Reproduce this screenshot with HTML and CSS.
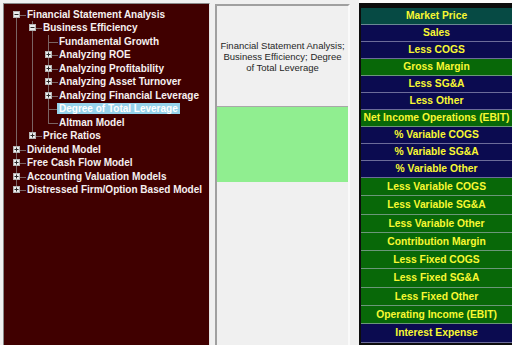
FILE: index.html
```html
<!DOCTYPE html>
<html lang="en">
<head>
    <meta charset="UTF-8">
    <title>Valuation Models</title>
    <link rel="stylesheet" href="styles.css">
</head>
<body>
    <div class="app">
        <div class="tree-pane">
            <ul class="tree root">
                <li>
                    <div class="row"><svg class="tg" width="7" height="7" viewBox="0 0 7 7"><rect x="0.5" y="0.5" width="6" height="6" fill="#ececec" stroke="#b4b4b4"/><path d="M1.5 3.5h4" stroke="#2a2a2a"/></svg><span class="label">Financial Statement Analysis</span></div>
                    <ul class="tree">
                        <li>
                            <div class="row"><svg class="tg" width="7" height="7" viewBox="0 0 7 7"><rect x="0.5" y="0.5" width="6" height="6" fill="#ececec" stroke="#b4b4b4"/><path d="M1.5 3.5h4" stroke="#2a2a2a"/></svg><span class="label">Business Efficiency</span></div>
                            <ul class="tree">
                                <li><div class="row"><span class="tg"></span><span class="label">Fundamental Growth</span></div></li>
                                <li><div class="row"><svg class="tg" width="7" height="7" viewBox="0 0 7 7"><rect x="0.5" y="0.5" width="6" height="6" fill="#ececec" stroke="#b4b4b4"/><path d="M1.5 3.5h4M3.5 1.5v4" stroke="#2a2a2a"/></svg><span class="label">Analyzing ROE</span></div></li>
                                <li><div class="row"><svg class="tg" width="7" height="7" viewBox="0 0 7 7"><rect x="0.5" y="0.5" width="6" height="6" fill="#ececec" stroke="#b4b4b4"/><path d="M1.5 3.5h4M3.5 1.5v4" stroke="#2a2a2a"/></svg><span class="label">Analyzing Profitability</span></div></li>
                                <li><div class="row"><svg class="tg" width="7" height="7" viewBox="0 0 7 7"><rect x="0.5" y="0.5" width="6" height="6" fill="#ececec" stroke="#b4b4b4"/><path d="M1.5 3.5h4M3.5 1.5v4" stroke="#2a2a2a"/></svg><span class="label">Analyzing Asset Turnover</span></div></li>
                                <li><div class="row"><svg class="tg" width="7" height="7" viewBox="0 0 7 7"><rect x="0.5" y="0.5" width="6" height="6" fill="#ececec" stroke="#b4b4b4"/><path d="M1.5 3.5h4M3.5 1.5v4" stroke="#2a2a2a"/></svg><span class="label">Analyzing Financial Leverage</span></div></li>
                                <li><div class="row"><span class="tg"></span><span class="label selected">Degree of Total Leverage</span></div></li>
                                <li><div class="row"><span class="tg"></span><span class="label">Altman Model</span></div></li>
                            </ul>
                        </li>
                        <li><div class="row"><svg class="tg" width="7" height="7" viewBox="0 0 7 7"><rect x="0.5" y="0.5" width="6" height="6" fill="#ececec" stroke="#b4b4b4"/><path d="M1.5 3.5h4M3.5 1.5v4" stroke="#2a2a2a"/></svg><span class="label">Price Ratios</span></div></li>
                    </ul>
                </li>
                <li><div class="row"><svg class="tg" width="7" height="7" viewBox="0 0 7 7"><rect x="0.5" y="0.5" width="6" height="6" fill="#ececec" stroke="#b4b4b4"/><path d="M1.5 3.5h4M3.5 1.5v4" stroke="#2a2a2a"/></svg><span class="label">Dividend Model</span></div></li>
                <li><div class="row"><svg class="tg" width="7" height="7" viewBox="0 0 7 7"><rect x="0.5" y="0.5" width="6" height="6" fill="#ececec" stroke="#b4b4b4"/><path d="M1.5 3.5h4M3.5 1.5v4" stroke="#2a2a2a"/></svg><span class="label">Free Cash Flow Model</span></div></li>
                <li><div class="row"><svg class="tg" width="7" height="7" viewBox="0 0 7 7"><rect x="0.5" y="0.5" width="6" height="6" fill="#ececec" stroke="#b4b4b4"/><path d="M1.5 3.5h4M3.5 1.5v4" stroke="#2a2a2a"/></svg><span class="label">Accounting Valuation Models</span></div></li>
                <li><div class="row"><svg class="tg" width="7" height="7" viewBox="0 0 7 7"><rect x="0.5" y="0.5" width="6" height="6" fill="#ececec" stroke="#b4b4b4"/><path d="M1.5 3.5h4M3.5 1.5v4" stroke="#2a2a2a"/></svg><span class="label">Distressed Firm/Option Based Model</span></div></li>
            </ul>
        </div>

        <div class="info-pane">
            <div class="info-title"><span>Financial Statement Analysis; Business Efficiency; Degree of Total Leverage</span></div>
            <div class="info-swatch"></div>
        </div>

        <div class="grid-pane">
            <div class="cell teal">Market Price</div>
            <div class="cell navy">Sales</div>
            <div class="cell navy">Less COGS</div>
            <div class="cell green">Gross Margin</div>
            <div class="cell navy">Less SG&amp;A</div>
            <div class="cell navy">Less Other</div>
            <div class="cell green">Net Income Operations (EBIT)</div>
            <div class="cell navy">% Variable COGS</div>
            <div class="cell navy">% Variable SG&amp;A</div>
            <div class="cell navy">% Variable Other</div>
            <div class="cell green tall">Less Variable COGS</div>
            <div class="cell green tall">Less Variable SG&amp;A</div>
            <div class="cell green tall">Less Variable Other</div>
            <div class="cell green tall">Contribution Margin</div>
            <div class="cell green tall">Less Fixed COGS</div>
            <div class="cell green tall">Less Fixed SG&amp;A</div>
            <div class="cell green tall">Less Fixed Other</div>
            <div class="cell green tall">Operating Income (EBIT)</div>
            <div class="cell navy tall">Interest Expense</div>
        </div>
    </div>
</body>
</html>
```

FILE: styles.css
```css
body {
    margin: 0;
    background-color: #f0f0f0;
    font-family: "Liberation Sans", Arial, sans-serif;
    overflow: hidden;
}

.app {
    display: flex;
    height: 345px;
}

/* tree on the left */
.tree-pane {
    box-sizing: border-box;
    width: 207px;
    margin: 3px 0 0 3px;
    padding-top: 3.5px;
    background-color: #400000;
    border-top: 1px solid #8a8a8a;
    border-left: 1px solid #8a8a8a;
    border-right: 1px solid #e4e4e4;
}

.tree {
    list-style: none;
    margin: 0;
    padding: 0;
}

.tree .tree {
    margin-left: 16px;
}

.tree li {
    position: relative;
}

.tree li::before {
    content: "";
    position: absolute;
    left: 12px;
    top: 0;
    bottom: 0;
    border-left: 1px solid #7a6464;
}

.tree li:last-child::before {
    bottom: auto;
    height: 7px;
}

.root > li:first-child::before {
    top: 7px;
}

.row {
    position: relative;
    display: flex;
    align-items: center;
    height: 13.5px;
}

.row::before {
    content: "";
    position: absolute;
    left: 12px;
    top: 7px;
    width: 10px;
    border-top: 1px solid #7a6464;
}

.tg {
    position: relative;
    z-index: 1;
    flex: none;
    width: 7px;
    height: 7px;
    margin-left: 9px;
}

.label {
    position: relative;
    z-index: 1;
    margin-left: 5px;
    padding: 0 2px;
    font-size: 10px;
    font-weight: bold;
    line-height: 11px;
    color: #f6f0f0;
    white-space: nowrap;
}

.label.selected {
    background-color: #96d3eb;
    color: #ffffff;
}

/* middle info box */
.info-pane {
    box-sizing: border-box;
    width: 135px;
    margin: 4px 0 0 5px;
    border-top: 2px solid #a0a0a0;
    border-left: 2px solid #a0a0a0;
    border-right: 2px solid #fafafa;
}

.info-title {
    height: 100px;
    display: flex;
    align-items: center;
    justify-content: center;
    text-align: center;
    border-bottom: 1px solid #a8a8a8;
    font-size: 9.5px;
    line-height: 11px;
    color: #262626;
}

.info-title span {
    max-width: 126px;
}

.info-swatch {
    height: 75px;
    background-color: #90ee90;
}

/* right value grid */
.grid-pane {
    box-sizing: border-box;
    width: 153px;
    margin-left: 9px;
    padding: 5px 0 0 2px;
    border-top: 3px solid #fbfbfb;
    background-color: #0c0c0c;
}

.cell {
    box-sizing: border-box;
    height: 17px;
    border-bottom: 1px solid rgba(190, 190, 215, 0.55);
    text-align: center;
    font-size: 10.3px;
    font-weight: bold;
    line-height: 16px;
    color: #f8f832;
    white-space: nowrap;
}

.cell.tall {
    height: 18.3px;
    line-height: 17.3px;
}

.teal {
    background-color: #064a44;
}

.navy {
    background-color: #0b0b50;
}

.green {
    background-color: #086808;
}
```
